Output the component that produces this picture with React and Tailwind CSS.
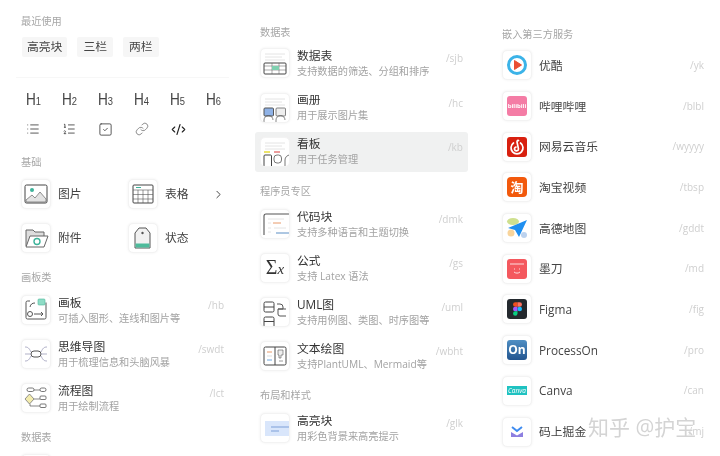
import { ChevronRight, CodeXml, Link, List, ListOrdered, SquareCheck } from "lucide-react";

const Box = ({ children, className = "" }) => (
    <div className={"w-[30px] h-[30px] shrink-0 rounded-[5px] bg-white border border-[#f3f3f3] shadow-[0_0_3px_#f0f0f0] flex items-center justify-center overflow-hidden " + className}>
        {children}
    </div>
);

const Svg = ({ children }) => (
    <svg viewBox="0 0 30 30" width="30" height="30" className="shrink-0" fill="none" stroke="#555" strokeWidth="1">
        {children}
    </svg>
);

const Header = ({ children, className = "" }) => (
    <div className={"h-[14px] leading-[14px] text-[10.2px] text-[#a6a6a6] " + className}>{children}</div>
);

const Row = ({ icon, title, desc, cut, active, pitch = "h-[44.4px]", titleClass = "text-[#333]" }) => (
    <div className={pitch + " flex items-center"}>
        <div className={"w-full h-[40px] flex items-center gap-[7px] pl-[5px] pr-[5px] rounded-[3px] " + (active ? "bg-[#f0f1f1]" : "")}>
            {icon}
            <div className="flex-1 min-w-0">
                <div className={"text-[11.8px] leading-[15px] whitespace-nowrap " + titleClass}>{title}</div>
                {desc && <div className="text-[10.2px] leading-[16px] text-[#a3a3a3] whitespace-nowrap">{desc}</div>}
            </div>
            <div className={"text-[10px] text-[#cfcfcf] whitespace-nowrap " + (desc ? "self-start mt-[8px]" : "")}>{cut}</div>
        </div>
    </div>
);

const ImageIcon = () => (
    <Svg>
        <rect x="4" y="6" width="22" height="18" rx="1.5" stroke="#444" />
        <circle cx="11" cy="11" r="2" fill="#3db39a" stroke="none" />
        <path d="M5 21l6-5 3 3 5-6 6 7v3H5z" fill="#e3e3e3" stroke="#666" strokeWidth="0.7" />
    </Svg>
);

const TableIcon = () => (
    <Svg>
        <rect x="5" y="6" width="20" height="18" rx="1" stroke="#444" />
        <path d="M5 11h20M5 15.5h20M5 20h20M10 11v13M15 11v13M20 11v13" strokeWidth="0.6" />
        <path d="M8 8.5h5" stroke="#3db39a" />
    </Svg>
);

const FolderIcon = () => (
    <Svg>
        <path d="M5 23V7h7l2 2h9v4" fill="#ddd" stroke="#666" />
        <path d="M5 24l4-11h18l-4 11z" fill="#fff" stroke="#666" />
        <circle cx="16" cy="18.500" r="3" stroke="#3db39a" strokeWidth="1.400" />
    </Svg>
);

const TagIcon = () => (
    <Svg>
        <path d="M11 5h7l4 5v15H7V10z" fill="#f1f1f1" stroke="#555" />
        <circle cx="14.500" cy="10" r="1.200" fill="#555" stroke="none" />
        <path d="M7.500 20.500h14v4h-14z" fill="#4dbb9b" stroke="none" />
    </Svg>
);

const BoardIcon = () => (
    <Svg>
        <path d="M9 6H6.500A1.500 1.500 0 0 0 5 7.500v15A1.500 1.500 0 0 0 6.500 24h17a1.500 1.500 0 0 0 1.500-1.500V7.500" />
        <rect x="17" y="4" width="7" height="6" rx="1" fill="#8fdcc6" stroke="#4dbb9b" strokeWidth="0.6" />
        <path d="M9 12a5 5 0 0 1 5-4M13 19h9m-2-2l2 2-2 2" />
        <circle cx="9" cy="19" r="2.500" />
    </Svg>
);

const MindIcon = () => (
    <Svg>
        <rect x="10" y="12" width="10" height="6" rx="3" stroke="#555" />
        <path d="M10 13C8 9 7 8 4 8M10 17c-2 4-3 5-6 5M20 13c2-4 3-5 6-5M20 17c2 4 3 5 6 5M4 15h6M20 15h6" stroke="#8f8fb0" strokeWidth="0.700" />
    </Svg>
);

const FlowIcon = () => (
    <Svg>
        <rect x="6" y="5" width="7" height="3.500" rx="1.700" strokeWidth="0.800" />
        <rect x="19" y="5" width="6" height="3.500" rx="1.700" strokeWidth="0.800" />
        <path d="M4 16l4.500-5 4.500 5-4.500 5z" fill="#f3ecae" stroke="#777" strokeWidth="0.800" />
        <rect x="19" y="13" width="6" height="3.500" rx="1" strokeWidth="0.800" />
        <rect x="19" y="21" width="6" height="3.500" rx="1" strokeWidth="0.800" />
        <path d="M13 7h6M13 16h6M9 21v2h10" strokeWidth="0.700" />
    </Svg>
);

const SheetBase = ({ children }) => (
    <Svg>
        <path d="M5 6h20M5 9h17M5 12h20" stroke="#ddd" strokeWidth="0.800" />
        {children}
    </Svg>
);

const SheetIcon = () => (
    <SheetBase>
        <rect x="4" y="15" width="22" height="11" rx="1" stroke="#444" />
        <path d="M4 18h22M4 22h22M12 15v11M19 15v11" strokeWidth="0.500" />
        <rect x="12" y="18" width="7" height="4" fill="#7fd0b0" stroke="none" />
    </SheetBase>
);

const AlbumIcon = () => (
    <SheetBase>
        <rect x="4" y="15" width="9.500" height="8" rx="1" fill="#8fb2e6" />
        <rect x="16" y="15" width="9.500" height="8" rx="1" fill="#eee" strokeWidth="0.700" />
        <path d="M4 29v-2a2 2 0 0 1 9 0M16 29v-2a2 2 0 0 1 9 0" strokeWidth="0.700" />
    </SheetBase>
);

const KanbanIcon = () => (
    <SheetBase>
        <path d="M4 15h6" stroke="#ece36a" strokeWidth="2" />
        <path d="M14 15h6" stroke="#ec9d9d" strokeWidth="2" />
        <rect x="4" y="18" width="7.500" height="13" rx="1" stroke="#444" />
        <rect x="14" y="18" width="7.500" height="8" rx="3" strokeWidth="0.800" />
        <path d="M30 18a5 5 0 0 0-5 5v6" strokeWidth="0.800" />
    </SheetBase>
);

const CodeIcon = () => (
    <Svg>
        <path d="M30 5H6a2 2 0 0 0-2 2v19" strokeWidth="1.100" />
        <path d="M8 10h16M8 14h3M8 19h3M8 23h3M14 19h12" stroke="#ddd" strokeWidth="0.800" />
        <path d="M13 14h8" stroke="#e89a6a" />
        <path d="M16 24h14" stroke="#5c8fc5" />
    </Svg>
);

const UmlIcon = () => (
    <Svg>
        <rect x="4" y="5" width="10" height="10" rx="1.500" stroke="#444" />
        <path d="M4 10h10" stroke="#444" />
        <path d="M17 7h3a3 3 0 0 1 3 3v2h-5v5a2 2 0 0 0 2 2h6M18 12h8" />
        <rect x="4" y="20" width="10" height="11" rx="1.500" stroke="#444" />
        <path d="M4 24.500h10" stroke="#444" />
    </Svg>
);

const TextDrawIcon = () => (
    <Svg>
        <rect x="4" y="6" width="22" height="18" rx="1.500" stroke="#444" />
        <path d="M15 6v18" stroke="#444" />
        <path d="M7 11h5" stroke="#e89a6a" />
        <path d="M7 15h5" stroke="#ddd" />
        <path d="M7 19h5" stroke="#6fa7de" />
        <path d="M18 9h5v5h-2v3h-2v-3h-1z" strokeWidth="0.600" fill="#eee" />
        <path d="M19 20h4" strokeWidth="0.600" />
    </Svg>
);

const HighlightIcon = () => (
    <Svg>
        <rect x="5" y="8" width="25" height="15" fill="#d9e6fb" stroke="none" />
        <path d="M11 14h19" stroke="#7d9fd8" />
        <path d="M11 18h8" stroke="#7d9fd8" />
    </Svg>
);

const Youku = () => (
    <Svg>
        <circle cx="15" cy="15" r="8.500" stroke="#3bb3e8" strokeWidth="3" />
        <path d="M12.500 10.500l7 4.500-7 4.500z" fill="#ea4f33" stroke="#ea4f33" strokeLinejoin="round" />
    </Svg>
);

const Netease = () => (
    <div className="w-[20px] h-[20px] rounded-[3px] bg-[#d8200f] flex items-center justify-center">
        <svg viewBox="0 0 20 20" width="20" height="20" fill="none" stroke="#fff" strokeWidth="1.700">
            <path d="M11.500 3.500c-1-.5-1.500.5-1.500 1.500l1.500 7a2 2 0 1 1-2.500-2M6.500 6a6 6 0 1 0 7 0" strokeLinecap="round" />
        </svg>
    </div>
);

const Amap = () => (
    <Svg>
        <ellipse cx="11" cy="8.500" rx="6" ry="3.500" fill="#cfe08f" stroke="none" />
        <circle cx="9" cy="20" r="3.500" fill="#f8d49b" stroke="none" />
        <circle cx="22" cy="22" r="3" fill="#bcd2ee" stroke="none" />
        <path d="M25 7L6 15l7 2 4 7z" fill="#1f8ff0" stroke="none" />
    </Svg>
);

const Figma = () => (
    <div className="w-[20px] h-[20px] rounded-[3px] bg-[#24292e] flex items-center justify-center">
        <svg viewBox="0 0 12 18" width="9" height="14">
            <path d="M6 0H3a3 3 0 0 0 0 6h3z" fill="#f24e1e" />
            <path d="M6 0h3a3 3 0 0 1 0 6H6z" fill="#ff7262" />
            <path d="M6 6H3a3 3 0 0 0 0 6h3z" fill="#a259ff" />
            <circle cx="9" cy="9" r="3" fill="#1abcfe" />
            <path d="M3 12h3v3a3 3 0 1 1-3-3z" fill="#0acf83" />
        </svg>
    </div>
);

const Juejin = () => (
    <svg viewBox="0 0 30 30" width="30" height="30" className="shrink-0" fill="none">
        <path d="M9 15v5h12v-5l-6 3.500z" fill="#8d7fe0" />
        <path d="M10 10l5 4 5-4" stroke="#3f8cf0" strokeWidth="2" />
    </svg>
);

const basics = [
    { icon: <ImageIcon />, label: "图片" },
    { icon: <TableIcon />, label: "表格", more: true },
    { icon: <FolderIcon />, label: "附件" },
    { icon: <TagIcon />, label: "状态" },
];

const services = [
    { icon: <Youku />, title: "优酷", cut: "/yk" },
    { icon: <div className="w-[20px] h-[20px] rounded-[3px] bg-[#f47ca5] flex items-center justify-center text-[6px] text-white font-bold">bilibili</div>, title: "哔哩哔哩", cut: "/blbl" },
    { icon: <Netease />, title: "网易云音乐", cut: "/wyyyy" },
    { icon: <div className="w-[20px] h-[20px] rounded-[4px] bg-[#f2590c] flex items-center justify-center text-[13px] font-bold text-white">淘</div>, title: "淘宝视频", cut: "/tbsp" },
    { icon: <Amap />, title: "高德地图", cut: "/gddt" },
    {
        icon: (
            <div className="w-[20px] h-[20px] rounded-[3px] bg-[#f4585e] flex items-center justify-center">
                <svg viewBox="0 0 20 20" width="20" height="20" fill="none" stroke="#fff" strokeWidth="0.800">
                    <path d="M3 5h14M7 10h1M12 10h1M7 13c2 1.500 4 1.500 6 0" />
                </svg>
            </div>
        ),
        title: "墨刀",
        cut: "/md",
    },
    { icon: <Figma />, title: "Figma", cut: "/fig" },
    { icon: <div className="w-[20px] h-[20px] rounded-[3px] bg-gradient-to-b from-[#4f8fc4] to-[#23558f] flex items-center justify-center text-[12px] font-bold text-white">On</div>, title: "ProcessOn", cut: "/pro" },
    { icon: <div className="w-[20px] h-[9px] bg-[#1fc2c1] flex items-center justify-center text-[6.5px] italic text-white">Canva</div>, title: "Canva", cut: "/can" },
    { icon: <Juejin />, title: "码上掘金", cut: "/mj" },
];

export default function App() {
    return (
        <div className="relative w-[720px] h-[456px] overflow-hidden bg-white flex blur-[0.3px] font-['Open_Sans','Noto_Sans_CJK_SC',sans-serif]">
            {/* left */}
            <div className="w-[254px] shrink-0 pl-[16px] pr-[25px]">
                <Header className="mt-[14px] ml-[5px]">最近使用</Header>
                <div className="mt-[9px] ml-[6px] flex gap-[10px] text-[11.8px] text-[#444]">
                    <div className="h-[20px] px-[5px] flex items-center bg-[#f6f6f6] rounded-[2px]">高亮块</div>
                    <div className="h-[20px] px-[6px] flex items-center bg-[#f6f6f6] rounded-[2px]">三栏</div>
                    <div className="h-[20px] px-[6px] flex items-center bg-[#f6f6f6] rounded-[2px]">两栏</div>
                </div>
                <div className="mt-[20px] border-t border-[#f7f7f7]"></div>
                <div className="mt-[12px] h-[20px] pl-[10px] flex items-center gap-[22px] text-[#444]">
                    {[1, 2, 3, 4, 5, 6].map((n) => (
                        <div key={n} className="w-[14px] whitespace-nowrap font-['Liberation_Sans'] text-[16px] origin-left scale-x-85">H<span className="text-[11px]">{n}</span></div>
                    ))}
                </div>
                <div className="mt-[9px] h-[20px] pl-[10px] flex items-center gap-[22px] text-[#444]">
                    <List size={14} strokeWidth={1.5} />
                    <ListOrdered size={14} strokeWidth={1.5} />
                    <SquareCheck size={15} strokeWidth={1.4} />
                    <Link size={14} strokeWidth={1.4} className="text-[#777]" />
                    <CodeXml size={15} strokeWidth={1.8} className="text-[#222]" />
                </div>
                <Header className="mt-[16px] ml-[5px]">基础</Header>
                <div className="mt-[3px] grid grid-cols-[107px_1fr] pl-[5px]">
                    {basics.map((b) => (
                        <div key={b.label} className="h-[44px] flex items-center gap-[7px]">
                            <Box>{b.icon}</Box>
                            <span className="text-[11.8px] text-[#444]">{b.label}</span>
                            {b.more && <ChevronRight size={13} strokeWidth={1.8} className="ml-auto mr-[4px] text-[#444]" />}
                        </div>
                    ))}
                </div>
                <Header className="mt-[10px] ml-[5px]">画板类</Header>
                <div className="mt-[4px]">
                    <Row pitch="h-[44px]" icon={<Box><BoardIcon /></Box>} title="画板" desc="可插入图形、连线和图片等" cut="/hb" />
                    <Row pitch="h-[44px]" icon={<Box><MindIcon /></Box>} title="思维导图" desc="用于梳理信息和头脑风暴" cut="/swdt" />
                    <Row pitch="h-[44px]" icon={<Box><FlowIcon /></Box>} title="流程图" desc="用于绘制流程" cut="/lct" />
                </div>
                <Header className="mt-[10px] ml-[5px]">数据表</Header>
                <div className="mt-[10px] ml-[5px]"><Box /></div>
            </div>

            {/* middle */}
            <div className="w-[214px] shrink-0 pl-[1px]">
                <Header className="mt-[25px] ml-[5px]">数据表</Header>
                <div className="mt-[2px]">
                    <Row icon={<Box><SheetIcon /></Box>} title="数据表" desc="支持数据的筛选、分组和排序" cut="/sjb" />
                    <Row icon={<Box><AlbumIcon /></Box>} title="画册" desc="用于展示图片集" cut="/hc" />
                    <Row active icon={<Box><KanbanIcon /></Box>} title="看板" desc="用于任务管理" cut="/kb" />
                </div>
                <Header className="mt-[10px] ml-[5px]">程序员专区</Header>
                <div className="mt-[4px]">
                    <Row pitch="h-[44px]" icon={<Box><CodeIcon /></Box>} title="代码块" desc="支持多种语言和主题切换" cut="/dmk" />
                    <Row pitch="h-[44px]" icon={<Box><span className="text-[20px] leading-[20px] text-[#333] font-['Liberation_Serif'] whitespace-nowrap">Σ<i className="text-[15px]">x</i></span></Box>} title="公式" desc="支持 Latex 语法" cut="/gs" />
                    <Row pitch="h-[44px]" icon={<Box><UmlIcon /></Box>} title="UML图" desc="支持用例图、类图、时序图等" cut="/uml" />
                    <Row pitch="h-[44px]" icon={<Box><TextDrawIcon /></Box>} title="文本绘图" desc="支持PlantUML、Mermaid等" cut="/wbht" />
                </div>
                <Header className="mt-[10px] ml-[5px]">布局和样式</Header>
                <div className="mt-[4px]">
                    <Row pitch="h-[44px]" icon={<Box><HighlightIcon /></Box>} title="高亮块" desc="用彩色背景来高亮提示" cut="/glk" />
                </div>
            </div>

            {/* right */}
            <div className="w-[212px] ml-[29px] shrink-0">
                <Header className="mt-[27px] ml-[5px]">嵌入第三方服务</Header>
                <div className="mt-[4px]">
                    {services.map((s) => (
                        <Row key={s.cut} pitch="h-[40.7px]" titleClass="text-[#444]" icon={<Box>{s.icon}</Box>} title={s.title} cut={s.cut} />
                    ))}
                </div>
            </div>

            <div className="absolute left-[588px] top-[414px] text-[21px] leading-[26px] text-[#d4d4d4] whitespace-nowrap [text-shadow:0_0_2px_#fff]">知乎 @护宝</div>
        </div>
    );
}
